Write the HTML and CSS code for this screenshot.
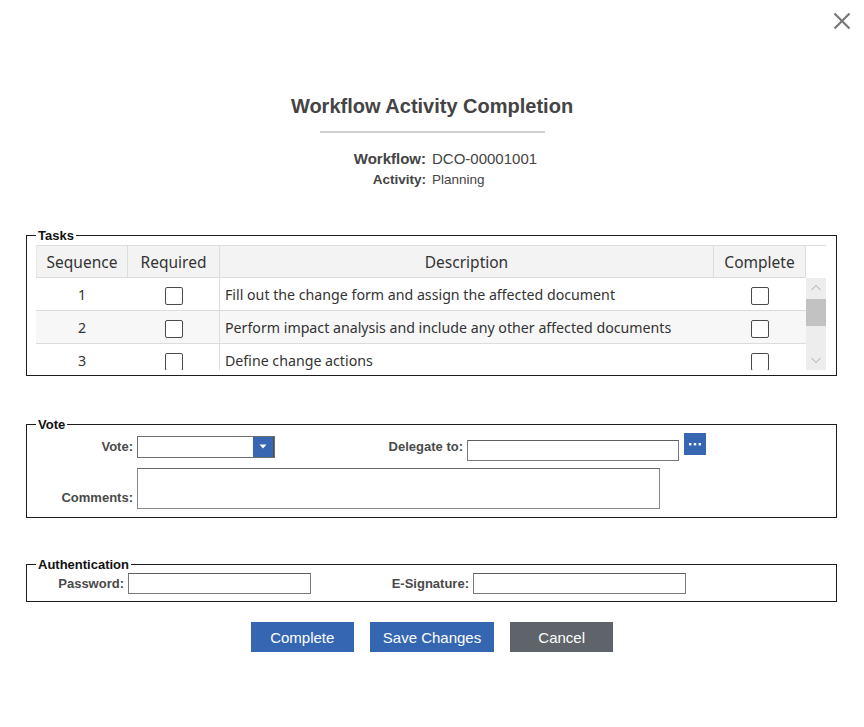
FILE: index.html
```html
<!DOCTYPE html>
<html lang="en">
<head>
<meta charset="utf-8">
<title>Workflow Activity Completion</title>
<link rel="stylesheet" href="styles.css">
</head>
<body>
<div class="dialog">
  <button class="close" type="button" aria-label="Close">
    <svg width="18" height="18" viewBox="0 0 18 18"><path d="M1.5 1.5 L16.5 16.5 M16.5 1.5 L1.5 16.5" stroke="#777" stroke-width="2.2" fill="none"/></svg>
  </button>
  <h1 class="title">Workflow Activity Completion</h1>
  <div class="rule"></div>
  <div class="info">
    <div class="info-label lg">Workflow:</div><div class="info-value lg">DCO-00001001</div>
    <div class="info-label sm">Activity:</div><div class="info-value sm">Planning</div>
  </div>

  <fieldset class="group tasks">
    <legend>Tasks</legend>
    <div class="grid">
      <div class="grid-head">
        <div class="hcell c-seq">Sequence</div>
        <div class="hcell c-req">Required</div>
        <div class="hcell c-desc">Description</div>
        <div class="hcell c-comp">Complete</div>
        <div class="head-spacer"></div>
      </div>
      <div class="grid-body">
        <div class="rows">
          <div class="row">
            <div class="cell c-seq">1</div>
            <div class="cell c-req sep"><span class="cb"></span></div>
            <div class="cell c-desc left">Fill out the change form and assign the affected document</div>
            <div class="cell c-comp"><span class="cb"></span></div>
          </div>
          <div class="row alt">
            <div class="cell c-seq">2</div>
            <div class="cell c-req sep"><span class="cb"></span></div>
            <div class="cell c-desc left">Perform impact analysis and include any other affected documents</div>
            <div class="cell c-comp"><span class="cb"></span></div>
          </div>
          <div class="row">
            <div class="cell c-seq">3</div>
            <div class="cell c-req sep"><span class="cb"></span></div>
            <div class="cell c-desc left">Define change actions</div>
            <div class="cell c-comp"><span class="cb"></span></div>
          </div>
        </div>
        <div class="vscroll">
          <svg class="arrow" width="20" height="20" viewBox="0 0 20 20"><path d="M5.5 12 L10 7.5 L14.5 12" stroke="#a6a6a6" stroke-width="1" fill="none"/></svg>
          <div class="thumb"></div>
          <div class="track-fill"></div>
          <svg class="arrow" width="20" height="20" viewBox="0 0 20 20"><path d="M5.5 8 L10 12.5 L14.5 8" stroke="#a6a6a6" stroke-width="1" fill="none"/></svg>
        </div>
      </div>
    </div>
  </fieldset>

  <fieldset class="group vote">
    <legend>Vote</legend>
    <div class="vote-row1">
      <label class="flabel vote-label">Vote:</label>
      <div class="select">
        <div class="select-text"></div>
        <div class="select-btn"><svg width="8" height="5" viewBox="0 0 8 5"><path d="M0.5 0.5 L7.5 0.5 L4 4.5 Z" fill="#fff"/></svg></div>
      </div>
      <label class="flabel delegate-label">Delegate to:</label>
      <input class="input delegate-input" type="text">
      <button class="dots" type="button" aria-label="Browse">
        <svg width="22" height="22" viewBox="0 0 22 22"><rect x="5" y="10" width="2.4" height="2.4" fill="#fff"/><rect x="9.8" y="10" width="2.4" height="2.4" fill="#fff"/><rect x="14.6" y="10" width="2.4" height="2.4" fill="#fff"/></svg>
      </button>
    </div>
    <div class="vote-row2">
      <label class="flabel vote-label">Comments:</label>
      <textarea class="comments"></textarea>
    </div>
  </fieldset>

  <fieldset class="group auth">
    <legend>Authentication</legend>
    <div class="auth-row">
      <label class="flabel pw-label">Password:</label>
      <input class="input pw-input" type="password">
      <label class="flabel sig-label">E-Signature:</label>
      <input class="input sig-input" type="password">
    </div>
  </fieldset>

  <div class="actions">
    <button class="btn btn-primary" type="button">Complete</button>
    <button class="btn btn-primary" type="button">Save Changes</button>
    <button class="btn btn-secondary" type="button">Cancel</button>
  </div>
</div>
</body>
</html>
```

FILE: styles.css
```css
* { box-sizing: border-box; }

html, body {
  margin: 0;
  padding: 0;
  background: #fff;
}

body {
  font-family: "Liberation Sans", Arial, sans-serif;
  color: #444;
}

.dialog {
  position: relative;
  width: 864px;
  min-height: 727px;
  padding-top: 94px;
}

.close {
  position: absolute;
  top: 12px;
  right: 13px;
  width: 18px;
  height: 18px;
  padding: 0;
  border: 0;
  background: transparent;
  display: block;
}
.close svg { display: block; }

.title {
  margin: 0;
  font-size: 20px;
  line-height: 24px;
  font-weight: bold;
  text-align: center;
  color: #444;
}

.rule {
  width: 225px;
  height: 2px;
  margin: 13px 0 0 320px;
  background: #d0d0d0;
}

.info {
  margin-top: 17px;
  display: grid;
  grid-template-columns: 426px 1fr;
  column-gap: 6px;
  row-gap: 3px;
}
.info-label {
  text-align: right;
  font-weight: bold;
  color: #444;
}
.info-value { color: #444; }
.lg { font-size: 15px; line-height: 18px; }
.sm { font-size: 13.5px; line-height: 18px; }

/* Fieldsets */
.group {
  margin: 40px 27px 0 26px;
  padding: 0 9px;
  border: 1px solid #1c1c1c;
  min-width: 0;
}
.group legend {
  font-family: "Liberation Sans", Arial, sans-serif;
  font-size: 13px;
  line-height: 15px;
  font-weight: bold;
  color: #111;
  padding: 0 2px;
}

.tasks { margin-top: 39px; padding-top: 2px; padding-bottom: 5px; }
.vote { margin-top: 41px; padding-top: 1px; padding-bottom: 8px; }
.auth { margin-top: 39px; padding-top: 1px; padding-bottom: 7px; }

/* Tasks grid */
.grid {
  width: 790px;
  font-family: "Noto Sans", "Open Sans", sans-serif;
  color: #333;
}
.grid-head {
  display: flex;
  height: 33px;
}
.hcell {
  height: 33px;
  display: flex;
  align-items: center;
  justify-content: center;
  background: #f3f3f3;
  border-top: 1px solid #dcdcdc;
  border-bottom: 1px solid #dcdcdc;
  border-right: 1px solid #dcdcdc;
  font-size: 15.5px;
  color: #333;
}
.hcell.c-seq { border-left: 1px solid #e6e6e6; }
.head-spacer {
  width: 20px;
  border-top: 1px solid #dcdcdc;
}
.c-seq { width: 92px; }
.c-req { width: 92px; }
.c-desc { width: 494px; }
.c-comp { width: 92px; }

.grid-body {
  display: flex;
  height: 92px;
}
.rows {
  width: 770px;
  height: 92px;
  overflow: hidden;
}
.row {
  display: flex;
  height: 33px;
  border-bottom: 1px solid #dcdcdc;
  background: #fff;
}
.row.alt { background: #f7f7f7; }
.cell {
  display: flex;
  align-items: center;
  justify-content: center;
  font-size: 14.2px;
  color: #333;
}
.cell.sep { border-right: 1px solid #dcdcdc; }
.cell.left {
  justify-content: flex-start;
  padding-left: 5px;
  white-space: nowrap;
}
.cb {
  display: block;
  width: 18px;
  height: 18px;
  margin-top: 3px;
  border: 1.5px solid #4a4a4a;
  border-radius: 2px;
  background: #fff;
}

.vscroll {
  width: 20px;
  height: 92px;
  background: #ededed;
  display: flex;
  flex-direction: column;
}
.vscroll .arrow { display: block; flex: none; }
.thumb {
  height: 27px;
  margin-top: 1px;
  background: #c2c2c2;
}
.track-fill { flex: 1; }

/* Form labels and inputs */
.flabel {
  font-family: "Liberation Sans", Arial, sans-serif;
  font-size: 13px;
  font-weight: bold;
  color: #4a4a4a;
  text-align: right;
  line-height: 22px;
  margin-right: 4px;
  flex: none;
}
.input {
  display: block;
  height: 21px;
  padding: 0 3px;
  border: 1px solid #7a7a7a;
  border-top-color: #5f5f5f;
  background: #fff;
  font: 13px "Liberation Sans", Arial, sans-serif;
  flex: none;
}

.vote-row1 {
  display: flex;
  align-items: flex-start;
  height: 28px;
}
.vote-label { width: 97px; }
.vote-row1 .vote-label { margin-top: 3px; }
.select {
  display: flex;
  width: 138px;
  height: 22px;
  margin-top: 3px;
  border: 1px solid #6f6f6f;
  background: #fff;
  flex: none;
}
.select-text { flex: 1; }
.select-btn {
  width: 21px;
  height: 20px;
  background: #3767b3;
  border-right: 1px solid #4a4a4a;
  display: flex;
  align-items: center;
  justify-content: center;
}
.select-btn svg { display: block; margin-top: -1px; }
.delegate-label { width: 188px; margin-top: 3px; }
.delegate-input { width: 212px; margin-top: 7px; }
.dots {
  width: 22px;
  height: 22px;
  margin-left: 5px;
  padding: 0;
  border: 0;
  background: #3767b3;
  flex: none;
}
.dots svg { display: block; }

.vote-row2 {
  display: flex;
  align-items: flex-end;
  margin-top: 7px;
}
.vote-row2 .vote-label { line-height: 16px; padding-bottom: 3px; }
.comments {
  display: block;
  width: 523px;
  height: 41px;
  margin: 0;
  padding: 2px 3px;
  border: 1px solid #8a8a8a;
  border-top-color: #6a6a6a;
  resize: none;
  font: 13px "Liberation Sans", Arial, sans-serif;
}

.auth-row {
  display: flex;
  align-items: center;
  height: 21px;
}
.pw-label { width: 88px; }
.pw-input { width: 183px; }
.sig-label { width: 158px; }
.sig-input { width: 213px; }

/* Buttons */
.actions {
  display: flex;
  justify-content: center;
  gap: 16px;
  margin-top: 20px;
}
.btn {
  height: 30px;
  min-width: 103px;
  padding: 0 13px;
  border: 0;
  color: #fff;
  font-family: "Liberation Sans", Arial, sans-serif;
  font-size: 15px;
}
.btn-primary { background: #3466b2; }
.btn-secondary { background: #5e6469; }
```
